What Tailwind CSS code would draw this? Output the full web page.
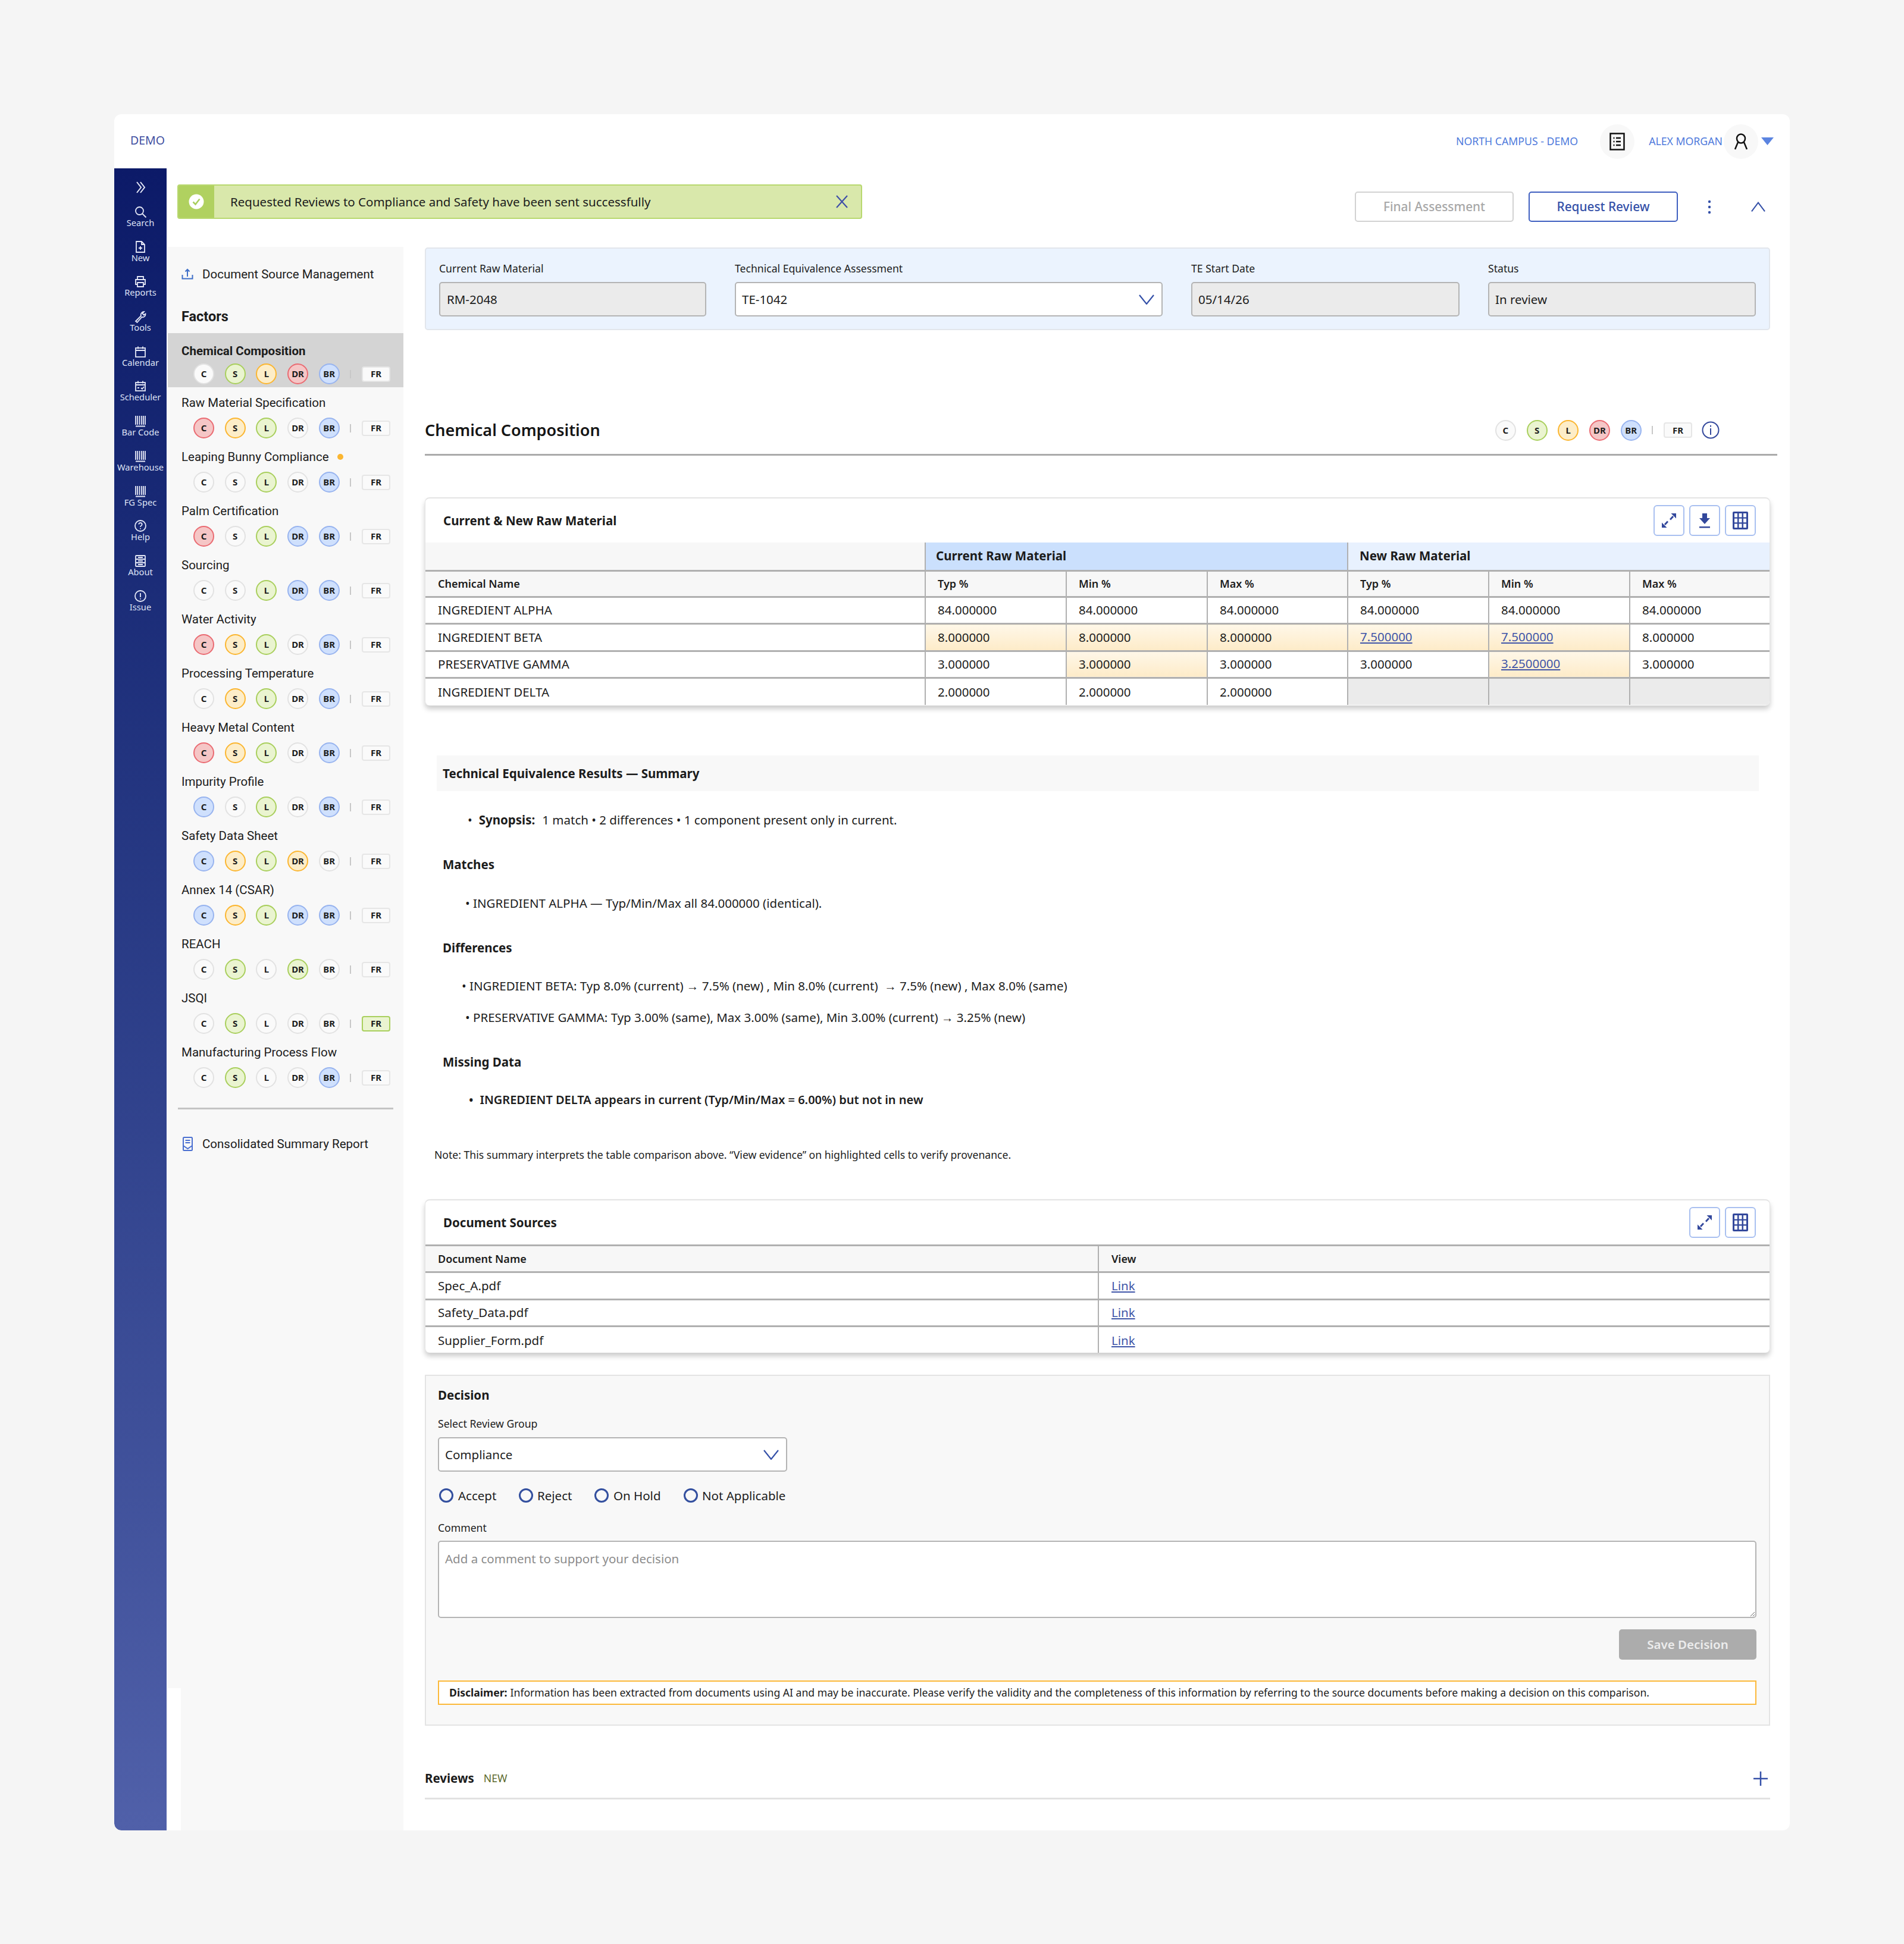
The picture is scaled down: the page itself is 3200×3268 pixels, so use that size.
<!DOCTYPE html>
<html lang="en">
<head>
  <meta charset="UTF-8" />
  <title>Technical Equivalence - Demo</title>
  <script src="https://cdn.jsdelivr.net/npm/@tailwindcss/browser@4"></script>
</head>
<body class="bg-[#f5f5f5] font-['Noto_Sans',sans-serif] text-[#1c1c1c]">

<div class="pt-[192px] pl-[192px] pb-[190px]">
  <div class="relative w-[2816px] h-[2885px] bg-white rounded-[12px] overflow-hidden flex flex-col">

    <!-- Top bar -->
    <header class="h-[91px] shrink-0 flex items-center pl-[27px] pr-[27px]">
      <span class="relative top-[-2px] text-[19.5px] text-[#3f4f9f]">DEMO</span>
      <div class="ml-auto flex items-center text-[17.7px] text-[#4f7bdc]">
        <span>NORTH CAMPUS - DEMO</span>
        <span class="ml-[37px] w-[58px] h-[58px] rounded-full bg-[#f8f8f8] flex items-center justify-center">
          <svg width="26" height="30" viewBox="0 0 26 30" fill="none"><rect x="1.5" y="1.5" width="23" height="27" stroke="#111" stroke-width="2.5"/><path d="M11 9h8M11 15h8M11 21h8M6.500 9h2M6.500 15h2M6.500 21h2" stroke="#111" stroke-width="2.500"/></svg>
        </span>
        <span class="ml-[24px]">ALEX MORGAN</span>
        <span class="ml-[2px] w-[58px] h-[58px] rounded-full bg-[#f8f8f8] flex items-center justify-center">
          <svg width="26" height="28" viewBox="0 0 26 28" fill="none" stroke="#111" stroke-width="2.500"><ellipse cx="13" cy="9" rx="7" ry="7.500"/><path d="M8 15 3 27M18 15l5 12"/></svg>
        </span>
        <svg class="ml-[5px]" width="21" height="13" viewBox="0 0 21 13"><path d="M0 0h21L10.500 13z" fill="#5b84e0"/></svg>
      </div>
    </header>

    <div class="flex flex-1 min-h-0">
      <!-- Left icon rail -->
      <nav id="rail" class="w-[88px] shrink-0 bg-linear-to-b from-[#0c1a68] to-[#5060a9] rounded-bl-[12px] flex flex-col items-center pt-[20px]"></nav>

      <div class="flex-1 min-w-0 flex flex-col">
        <!-- Toast and actions -->
        <div class="h-[132px] shrink-0 flex items-start">
          <div class="ml-[18px] mt-[27px] w-[1151px] h-[58px] flex items-center bg-[#d9e8ab] border-2 border-[#b8d86f] rounded-[4px] overflow-hidden">
            <div class="w-[60px] h-full bg-[#b0d160] flex items-center justify-center shrink-0">
              <svg width="26" height="26" viewBox="0 0 26 26"><circle cx="13" cy="13" r="12.500" fill="#fff"/><path d="M7.500 13.500l4 4 7-9" fill="none" stroke="#a9cf5d" stroke-width="2.500"/></svg>
            </div>
            <span class="ml-[27px] text-[20.5px] whitespace-nowrap">Requested Reviews to Compliance and Safety have been sent successfully</span>
            <svg class="ml-auto mr-[22px]" width="20" height="22" viewBox="0 0 20 22" fill="none" stroke="#3f4fa8" stroke-width="2.200"><path d="M1 1l18 20M19 1 1 21"/></svg>
          </div>
          <div class="ml-[828px] mt-[39px] w-[267px] h-[51px] rounded-[5px] border-2 border-[#d2d2d2] flex items-center justify-center text-[20.8px] font-medium text-[#a8a8a8]">Final Assessment</div>
          <div class="ml-[25px] mt-[39px] w-[251px] h-[51px] rounded-[5px] border-2 border-[#3f5fc0] flex items-center justify-center text-[20.8px] font-medium text-[#3450a8]">Request Review</div>
          <div class="ml-[41px] mt-[39px] w-[24px] h-[51px] flex items-center justify-center">
            <svg width="6" height="24" viewBox="0 0 6 24" fill="#3450a8"><circle cx="3" cy="3" r="2.200"/><circle cx="3" cy="12" r="2.200"/><circle cx="3" cy="21" r="2.200"/></svg>
          </div>
          <div class="ml-[58px] mt-[39px] w-[24px] h-[51px] flex items-center justify-center">
            <svg width="26" height="18" viewBox="0 0 26 18" fill="none" stroke="#3450a8" stroke-width="2.200"><path d="M1 17 13 1l12 16"/></svg>
          </div>
        </div>

        <div class="flex flex-1 min-h-0">
          <!-- Factors panel -->
          <aside class="ml-[2px] w-[396px] shrink-0 bg-[#f8f8f8] font-['Roboto',sans-serif] text-[20.5px]">
            <div class="h-[92px] flex items-center pl-[23px]">
              <svg width="20" height="20" viewBox="0 0 20 20" fill="none" stroke="#3f6fc8" stroke-width="2"><path d="M10 14V2M6.500 5.500 10 2l3.500 3.500M1.500 11v6.500h17V11"/></svg>
              <span class="ml-[15px]">Document Source Management</span>
            </div>
            <div class="h-[51px] mb-[2px] pl-[23px] flex items-center text-[23.5px] font-bold">Factors</div>
            <div id="factors"></div>
            <div class="mt-[28px] mx-[17px] border-t-[3px] border-[#c4c4c4]"></div>
            <div class="mt-[43px] pl-[25px] flex items-center h-[30px]">
              <svg width="17" height="24" viewBox="0 0 17 24" fill="none" stroke="#4a6fd0" stroke-width="2"><rect x="1" y="1" width="15" height="22" rx="1.500"/><path d="M4.500 6h8M4.500 10h8M1 15l7.500 5 7.500-5"/></svg>
              <span class="ml-[16px]">Consolidated Summary Report</span>
            </div>
          </aside>

          <!-- Main content -->
          <main class="flex-1 min-w-0 pl-[36px] pr-[33px] pt-[1px] text-[20.5px]">
            <!-- Context fields -->
            <section class="h-[139px] bg-[#ebf3fe] border-2 border-[#e2e6ec] rounded-[5px] px-[22px] pt-[20px] grid grid-cols-[449px_719px_451px_450px] gap-x-[48px]">
              <div>
                <div class="h-[26px] leading-[26px] text-[17.6px]">Current Raw Material</div>
                <div class="mt-[10px] h-[58px] rounded-[5px] bg-[#ebebeb] border-2 border-[#b4b4b4] flex items-center px-[11px]">RM-2048</div>
              </div>
              <div>
                <div class="h-[26px] leading-[26px] text-[17.6px]">Technical Equivalence Assessment</div>
                <div class="mt-[10px] h-[58px] rounded-[5px] bg-white border-2 border-[#b4b4b4] flex items-center justify-between pl-[10px] pr-[12px]">
                  <span>TE-1042</span>
                  <svg width="26" height="17" viewBox="0 0 26 17" fill="none" stroke="#3450a8" stroke-width="2.200"><path d="M1 1l12 15L25 1"/></svg>
                </div>
              </div>
              <div>
                <div class="h-[26px] leading-[26px] text-[17.6px]">TE Start Date</div>
                <div class="mt-[10px] h-[58px] rounded-[5px] bg-[#ebebeb] border-2 border-[#b4b4b4] flex items-center px-[10px]">05/14/26</div>
              </div>
              <div>
                <div class="h-[26px] leading-[26px] text-[17.6px]">Status</div>
                <div class="mt-[10px] h-[58px] rounded-[5px] bg-[#ebebeb] border-2 border-[#b4b4b4] flex items-center px-[10px]">In review</div>
              </div>
            </section>

            <!-- Factor title -->
            <div class="mt-[138px] mr-[-12px] h-[73px] pb-[10px] border-b-[3px] border-[#ababab] flex items-center">
              <h2 class="text-[27px] font-semibold text-[#151515]">Chemical Composition</h2>
              <div id="titleBadges" class="ml-auto mr-[97px] flex items-center"></div>
            </div>

            <!-- Comparison table -->
            <section class="mt-[70px] h-[350px] rounded-[8px] border-t-2 border-x border-[#e4e4e4] shadow-[0_6px_8px_rgba(0,0,0,0.2)] overflow-hidden">
              <div class="h-[74px] flex items-center pl-[30px] pr-[23px]">
                <span class="font-bold">Current &amp; New Raw Material</span>
                <div class="ml-auto flex gap-[8px]">
                  <span class="w-[52px] h-[52px] rounded-[6px] border-2 border-[#a9c0f0] flex items-center justify-center"><svg width="26" height="26" viewBox="0 0 26 26"><path d="M25 1v8.500L16.500 1zM1 25v-8.500L9.500 25z" fill="#33489c"/><path d="M20 6l-5 5.500M6 20l5-5.500" stroke="#33489c" stroke-width="2.800"/></svg></span>
                  <span class="w-[52px] h-[52px] rounded-[6px] border-2 border-[#a9c0f0] flex items-center justify-center"><svg width="20" height="26" viewBox="0 0 20 26" fill="#33489c"><path d="M6 1h8v8h5L10 19 1 9h5zM1 23h18v2.500H1z"/></svg></span>
                  <span class="w-[52px] h-[52px] rounded-[6px] border-2 border-[#a9c0f0] flex items-center justify-center"><svg width="26" height="30" viewBox="0 0 26 30"><rect width="26" height="30" rx="2" fill="#33489c"/><g fill="#fff"><rect x="3" y="3" width="5" height="6.500"/><rect x="10.500" y="3" width="5" height="6.500"/><rect x="18" y="3" width="5" height="6.500"/><rect x="3" y="11.700" width="5" height="6.500"/><rect x="10.500" y="11.700" width="5" height="6.500"/><rect x="18" y="11.700" width="5" height="6.500"/><rect x="3" y="20.500" width="5" height="6.500"/><rect x="10.500" y="20.500" width="5" height="6.500"/><rect x="18" y="20.500" width="5" height="6.500"/></g></svg></span>
                </div>
              </div>
              <table class="w-full table-fixed border-collapse">
                <colgroup><col class="w-[840px]"><col class="w-[237px]"><col class="w-[237px]"><col class="w-[236px]"><col class="w-[237px]"><col class="w-[237px]"><col></colgroup>
                <thead>
                  <tr class="h-[47px] text-left">
                    <th class="bg-[#f7f7f7] border-b-[3px] border-[#b0b0b0]"></th>
                    <th colspan="3" class="pl-[17px] font-bold bg-[#cbe0fd] border-b-[3px] border-l-2 border-[#b0b0b0]">Current Raw Material</th>
                    <th colspan="3" class="pl-[19px] font-bold bg-[#e8f1fe] border-b-[3px] border-l-2 border-[#b0b0b0]">New Raw Material</th>
                  </tr>
                  <tr id="compareHead" class="h-[44px] text-[18px] text-left"></tr>
                </thead>
                <tbody id="compareBody"></tbody>
              </table>
            </section>

            <!-- Summary -->
            <div class="mt-[84px] ml-[20px] mr-[19px] h-[60px] bg-[#f8f8f8] flex items-center pl-[10px] font-bold">Technical Equivalence Results — Summary</div>
            <div class="mt-[33px] h-[30px] leading-[30px] pl-[72px]">•<b class="ml-[11px] font-bold">Synopsis:</b><span class="ml-[12px]">1 match • 2 differences • 1 component present only in current.</span></div>
            <div class="mt-[45px] h-[30px] leading-[30px] pl-[30px] font-bold">Matches</div>
            <div class="mt-[35px] h-[30px] leading-[30px] pl-[68px]">• INGREDIENT ALPHA — Typ/Min/Max all 84.000000 (identical).</div>
            <div class="mt-[45px] h-[30px] leading-[30px] pl-[30px] font-bold">Differences</div>
            <div class="mt-[34px] h-[30px] leading-[30px] pl-[62px]">• INGREDIENT BETA: Typ 8.0% (current) → 7.5% (new) , Min 8.0% (current) &nbsp;→ 7.5% (new) , Max 8.0% (same)</div>
            <div class="mt-[23px] h-[30px] leading-[30px] pl-[68px]">• PRESERVATIVE GAMMA: Typ 3.00% (same), Max 3.00% (same), Min 3.00% (current) → 3.25% (new)</div>
            <div class="mt-[45px] h-[30px] leading-[30px] pl-[30px] font-bold">Missing Data</div>
            <div class="mt-[34px] h-[30px] leading-[30px] pl-[74px] text-[20px] font-semibold">•<span class="ml-[11px]">INGREDIENT DELTA appears in current (Typ/Min/Max = 6.00%) but not in new</span></div>
            <div class="mt-[62px] h-[30px] leading-[30px] pl-[16px] text-[17.6px]">Note: This summary interprets the table comparison above. “View evidence” on highlighted cells to verify provenance.</div>

            <!-- Document sources -->
            <section class="mt-[60px] h-[258px] rounded-[8px] border-t-2 border-x border-[#e4e4e4] shadow-[0_6px_8px_rgba(0,0,0,0.2)] overflow-hidden">
              <div class="h-[74px] flex items-center pl-[30px] pr-[23px]">
                <span class="font-bold">Document Sources</span>
                <div class="ml-auto flex gap-[8px]">
                  <span class="w-[52px] h-[52px] rounded-[6px] border-2 border-[#a9c0f0] flex items-center justify-center"><svg width="26" height="26" viewBox="0 0 26 26"><path d="M25 1v8.500L16.500 1zM1 25v-8.500L9.500 25z" fill="#33489c"/><path d="M20 6l-5 5.500M6 20l5-5.500" stroke="#33489c" stroke-width="2.800"/></svg></span>
                  <span class="w-[52px] h-[52px] rounded-[6px] border-2 border-[#a9c0f0] flex items-center justify-center"><svg width="26" height="30" viewBox="0 0 26 30"><rect width="26" height="30" rx="2" fill="#33489c"/><g fill="#fff"><rect x="3" y="3" width="5" height="6.500"/><rect x="10.500" y="3" width="5" height="6.500"/><rect x="18" y="3" width="5" height="6.500"/><rect x="3" y="11.700" width="5" height="6.500"/><rect x="10.500" y="11.700" width="5" height="6.500"/><rect x="18" y="11.700" width="5" height="6.500"/><rect x="3" y="20.500" width="5" height="6.500"/><rect x="10.500" y="20.500" width="5" height="6.500"/><rect x="18" y="20.500" width="5" height="6.500"/></g></svg></span>
                </div>
              </div>
              <table class="w-full table-fixed border-collapse">
                <colgroup><col class="w-[1131px]"><col></colgroup>
                <thead>
                  <tr class="h-[45px] text-[18px] text-left border-t-[3px] border-b-[3px] border-[#b0b0b0] bg-[#f7f7f7]">
                    <th class="pl-[21px] font-semibold">Document Name</th>
                    <th class="pl-[21px] font-semibold border-l-2 border-[#b0b0b0]">View</th>
                  </tr>
                </thead>
                <tbody id="docBody"></tbody>
              </table>
            </section>

            <!-- Decision -->
            <section class="mt-[37px] h-[590px] bg-[#f8f8f8] border-2 border-[#e4e4e4] pl-[20px] pr-[21px] pt-[17px]">
              <div class="h-[30px] leading-[30px] font-bold">Decision</div>
              <div class="mt-[20px] h-[26px] leading-[26px] text-[17.6px]">Select Review Group</div>
              <div class="mt-[10px] w-[587px] h-[58px] rounded-[5px] bg-white border-2 border-[#b4b4b4] flex items-center justify-between pl-[10px] pr-[12px]">
                <span>Compliance</span>
                <svg width="26" height="17" viewBox="0 0 26 17" fill="none" stroke="#3450a8" stroke-width="2.200"><path d="M1 1l12 15L25 1"/></svg>
              </div>
              <div class="mt-[25px] h-[30px] pl-[2px] flex items-center">
                <label class="w-[134px] flex items-center gap-[8px]"><span class="w-[24px] h-[24px] rounded-full border-[3px] border-[#34509f]"></span>Accept</label>
                <label class="w-[127px] flex items-center gap-[7px]"><span class="w-[24px] h-[24px] rounded-full border-[3px] border-[#34509f]"></span>Reject</label>
                <label class="w-[150px] flex items-center gap-[8px]"><span class="w-[24px] h-[24px] rounded-full border-[3px] border-[#34509f]"></span>On Hold</label>
                <label class="flex items-center gap-[7px]"><span class="w-[24px] h-[24px] rounded-full border-[3px] border-[#34509f]"></span>Not Applicable</label>
              </div>
              <div class="mt-[26px] h-[26px] leading-[26px] text-[17.6px]">Comment</div>
              <textarea placeholder="Add a comment to support your decision" class="mt-[9px] block w-full h-[130px] rounded-[5px] bg-white border-2 border-[#b4b4b4] px-[10px] py-[13px] leading-[30px] placeholder:text-[#8c8c8c]"></textarea>
              <div class="mt-[19px] flex justify-end">
                <div class="w-[231px] h-[51px] rounded-[5px] bg-[#acacac] text-[#ececec] font-semibold flex items-center justify-center">Save Decision</div>
              </div>
              <div class="mt-[35px] h-[41px] bg-white border-2 border-[#fcb93a] flex items-center pl-[17px] text-[17.6px] whitespace-nowrap">
                <b class="font-bold">Disclaimer:</b><span class="ml-[5px]">Information has been extracted from documents using AI and may be inaccurate. Please verify the validity and the completeness of this information by referring to the source documents before making a decision on this comparison.</span>
              </div>
            </section>

            <!-- Reviews -->
            <div class="mt-[65px] h-[59px] pb-[9px] border-b-[3px] border-[#e2e2e2] flex items-center">
              <span class="font-bold">Reviews</span>
              <span class="ml-[16px] text-[17.7px] text-[#5d6b2d]">NEW</span>
              <svg class="ml-auto mr-[4px]" width="24" height="24" viewBox="0 0 24 24" fill="none" stroke="#3450a8" stroke-width="2.500"><path d="M12 0v24M0 12h24"/></svg>
            </div>
          </main>
        </div>
      </div>
    </div>

    <!-- Pale strip over the foot of the factors panel -->
    <div class="absolute left-[90px] bottom-0 w-[22px] h-[239px] bg-white"></div>
  </div>
</div>

<script>
  const railIcons = {
    chevrons: '<path d="M5 2l7 9-7 9M11 2l7 9-7 9"/>',
    search: '<circle cx="9.500" cy="9.500" r="6.500"/><path d="M14.500 14.500 20.500 20.500"/>',
    file: '<path d="M4 2h9l5 5v13H4zM13 2v5h5M11 10v6M8 13h6"/>',
    printer: '<path d="M6 8V3h10v5M6 16H3V8h16v8h-3M6 13h10v7H6z"/>',
    tool: '<path d="M3 19l9-9c-1-3 1-7 5-7l-2.500 3 2 2.500 3-2c.5 4-3 6.500-6 5.500l-8 9z"/>',
    calendar: '<rect x="3" y="5" width="16" height="15"/><path d="M3 9h16M7 2.500v4M15 2.500v4"/>',
    schedule: '<rect x="3" y="5" width="16" height="14"/><path d="M3 9h16M7 2.500v4M15 2.500v4M12 14l2 2 3-4M6 14h3"/>',
    barcode: '<path d="M3 2v15M6 2v15M9.500 2v15M13 2v15M16 2v15M19 2v15M3 19.500h16" stroke-dasharray="none"/>',
    help: '<circle cx="11" cy="11" r="9"/><path d="M8.300 8.500c0-3.500 5.400-3.500 5.400 0 0 2.300-2.700 2-2.700 4.500M11 15v1.500"/>',
    about: '<rect x="3" y="2" width="16" height="18" rx="1"/><path d="M3 8h16M3 14h16M7 5h8M7 11h8M7 17h8"/>',
    issue: '<circle cx="11" cy="11" r="9"/><path d="M11 6v7M11 15v1.500"/>'
  };

  const railItems = [
    ['Search', 'search'], ['New', 'file'], ['Reports', 'printer'], ['Tools', 'tool'],
    ['Calendar', 'calendar'], ['Scheduler', 'schedule'], ['Bar Code', 'barcode'],
    ['Warehouse', 'barcode'], ['FG Spec', 'barcode'], ['Help', 'help'], ['About', 'about'], ['Issue', 'issue']
  ];

  const railSvg = name => `<svg width="22" height="22" viewBox="0 0 22 22" fill="none" stroke="#e4e7f6" stroke-width="1.800">${railIcons[name]}</svg>`;

  document.getElementById('rail').innerHTML =
    `<div class="h-[24px] mb-[15px] flex items-center">${railSvg('chevrons').replace('stroke-width="1.800"', 'stroke-width="2"')}</div>` +
    railItems.map(([label, icon]) => `
      <div class="h-[58.7px] w-full shrink-0 pt-[3px] flex flex-col items-center text-[14.7px] text-[#dfe3f5]">
        ${railSvg(icon)}
        <span class="relative top-[-2px] leading-[18px] whitespace-nowrap">${label}</span>
      </div>`).join('');

  // n = not started, r = red, y = amber, g = green, b = blue
  const badgeStyle = {
    n: 'bg-[#fafafa] border-[#e2e2e2]',
    r: 'bg-[#f5c6c6] border-[#ea6b72]',
    y: 'bg-[#fdedc8] border-[#fbb631]',
    g: 'bg-[#eaf4d0] border-[#a9cf5d]',
    b: 'bg-[#cfe0fd] border-[#98b4ef]'
  };
  const badgeNames = ['C', 'S', 'L', 'DR', 'BR'];

  function badgeRow(states, fr) {
    const circles = badgeNames.map((name, i) => `
      <span class="w-[35px] h-[35px] rounded-full border-2 ${badgeStyle[states[i]]} flex items-center justify-center font-['Noto_Sans',sans-serif] text-[15px] font-bold text-[#1c1c1c]">${name}</span>`).join('');
    const frStyle = fr ? 'bg-[#eaf4d0] border-[#a9cf5d]' : 'bg-[#fafafa] border-[#e6e6e6]';
    return `${circles}
      <span class="w-[2px] h-[14px] bg-[#c8c8c8]"></span>
      <span class="w-[48px] h-[26px] rounded-[4px] border-2 ${frStyle} flex items-center justify-center font-['Noto_Sans',sans-serif] text-[15px] font-bold text-[#1c1c1c]">FR</span>`;
  }

  const factors = [
    ['Raw Material Specification', 'ryg nb'],
    ['Leaping Bunny Compliance', 'nng nb', false, true],
    ['Palm Certification', 'rng bb'],
    ['Sourcing', 'nng bb'],
    ['Water Activity', 'ryg nb'],
    ['Processing Temperature', 'nyg nb'],
    ['Heavy Metal Content', 'ryg nb'],
    ['Impurity Profile', 'bng nb'],
    ['Safety Data Sheet', 'byg yn'],
    ['Annex 14 (CSAR)', 'byg bb'],
    ['REACH', 'ngn gn'],
    ['JSQI', 'ngn nn', true],
    ['Manufacturing Process Flow', 'ngn nb']
  ];

  document.getElementById('factors').innerHTML = `
    <div class="h-[91px] pt-[18px] pl-[23px] bg-[#d4d4d4]">
      <div class="h-[24px] leading-[24px] font-bold">Chemical Composition</div>
      <div class="mt-[9px] pl-[20px] flex items-center gap-[17.7px]">${badgeRow(['n', 'g', 'y', 'r', 'b'])}</div>
    </div>` + factors.map(([name, states, fr, dot]) => `
    <div class="h-[91px] pt-[14px] pl-[23px]">
      <div class="h-[24px] leading-[24px] flex items-center">${name}${dot ? '<span class="ml-[14px] w-[10px] h-[10px] rounded-full bg-[#fbb631]"></span>' : ''}</div>
      <div class="mt-[13px] pl-[20px] flex items-center gap-[17.7px]">${badgeRow(states.replace(' ', '').split(''), fr)}</div>
    </div>`).join('');

  document.getElementById('titleBadges').innerHTML =
    `<div class="flex items-center gap-[17.7px]">${badgeRow(['n', 'g', 'y', 'r', 'b'])}</div>
     <svg class="ml-[16px]" width="30" height="30" viewBox="0 0 30 30" fill="none" stroke="#33489c" stroke-width="2"><circle cx="15" cy="15" r="13.500"/><path d="M15 12v11M15 7v2.500"/></svg>`;

  const head = ['Chemical Name', 'Typ %', 'Min %', 'Max %', 'Typ %', 'Min %', 'Max %'];
  document.getElementById('compareHead').innerHTML = head.map((label, i) => `
    <th class="${i ? 'pl-[20px] border-l-2' : 'pl-[21px]'} font-semibold bg-[#f7f7f7] border-b-[3px] border-[#b0b0b0]">${label}</th>`).join('');

  // h = highlighted cell, l = highlighted link, e = empty
  const rows = [
    ['INGREDIENT ALPHA', '84.000000', '84.000000', '84.000000', '84.000000', '84.000000', '84.000000'],
    ['INGREDIENT BETA', 'h8.000000', 'h8.000000', 'h8.000000', 'l7.500000', 'l7.500000', '8.000000'],
    ['PRESERVATIVE GAMMA', '3.000000', 'h3.000000', '3.000000', '3.000000', 'l3.2500000', '3.000000'],
    ['INGREDIENT DELTA', '2.000000', '2.000000', '2.000000', 'e', 'e', 'e']
  ];

  function compareCell(value, i) {
    const base = i ? 'pl-[20px] border-l-2 border-[#b0b0b0]' : 'pl-[21px]';
    if (value[0] === 'h') return `<td class="${base} bg-linear-to-b from-[#fff7e8] to-[#fdebc8]">${value.slice(1)}</td>`;
    if (value[0] === 'l') return `<td class="${base} bg-linear-to-b from-[#fff7e8] to-[#fdebc8]"><a class="relative top-[-1px] text-[#3f55a8] underline">${value.slice(1)}</a></td>`;
    if (value === 'e') return `<td class="${base} bg-[#ebebeb]"></td>`;
    return `<td class="${base}">${value}</td>`;
  }

  document.getElementById('compareBody').innerHTML = rows.map((row, r) => `
    <tr class="h-[45.500px] ${r < 3 ? 'border-b-[3px] border-[#b0b0b0]' : ''}">${row.map(compareCell).join('')}</tr>`).join('');

  document.getElementById('docBody').innerHTML = ['Spec_A.pdf', 'Safety_Data.pdf', 'Supplier_Form.pdf'].map((name, r) => `
    <tr class="h-[45.500px] ${r < 2 ? 'border-b-[3px] border-[#b0b0b0]' : ''}">
      <td class="pl-[21px]">${name}</td>
      <td class="pl-[21px] border-l-2 border-[#b0b0b0]"><a class="text-[#3f55a8] underline">Link</a></td>
    </tr>`).join('');
</script>

</body>
</html>
